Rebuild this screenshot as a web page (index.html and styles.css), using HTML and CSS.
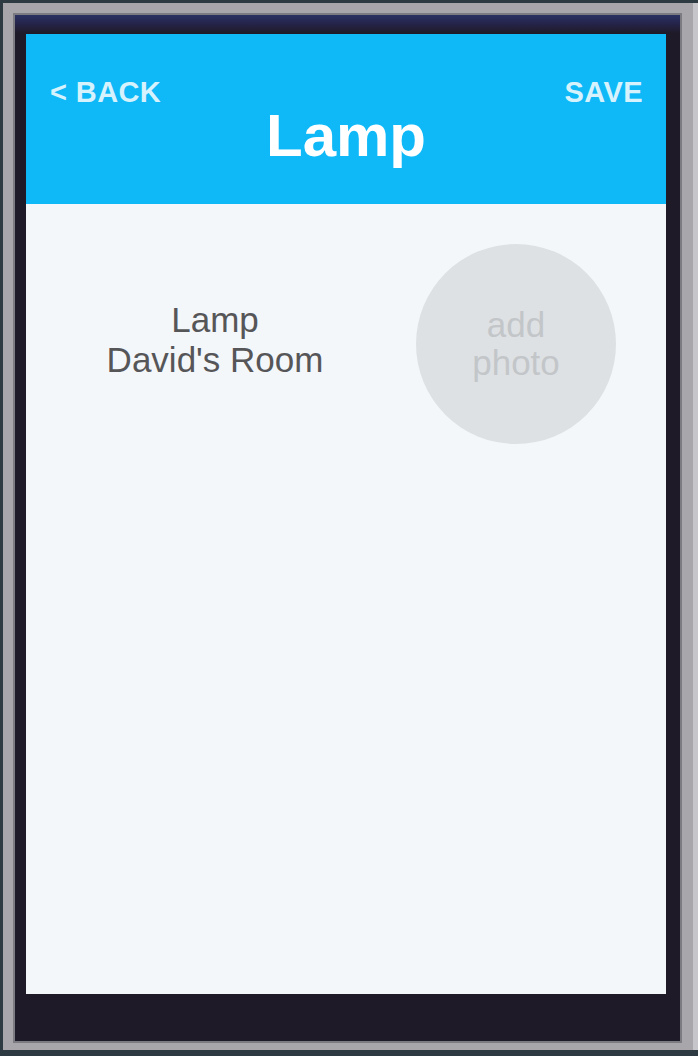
FILE: index.html
```html
<!DOCTYPE html>
<html lang="en">
<head>
<meta charset="utf-8">
<title>Lamp</title>
<link rel="stylesheet" href="styles.css">
</head>
<body>
<div class="device">
  <div class="bezel">
    <div class="screen">
      <header class="header">
        <div class="nav">
          <span class="nav-btn">&lt; BACK</span>
          <span class="nav-btn">SAVE</span>
        </div>
        <h1 class="title">Lamp</h1>
      </header>
      <main class="content">
        <div class="info">
          <div>Lamp</div>
          <div>David's Room</div>
        </div>
        <div class="photo">
          <span>add<br>photo</span>
        </div>
      </main>
    </div>
  </div>
</div>
</body>
</html>
```

FILE: styles.css
```css
html, body {
  margin: 0;
  padding: 0;
}
body {
  width: 698px;
  height: 1056px;
  overflow: hidden;
  background: #2e3a42;
  font-family: "Liberation Sans", Arial, Helvetica, sans-serif;
}
.device {
  box-sizing: border-box;
  margin: 3px 0 0 3px;
  width: 695px;
  height: 1047px;
  padding: 10px 16px 7px 10px;
  background: linear-gradient(to left, #c6c6ca 0, #c6c6ca 5px, #a8a6aa 5px);
}
.bezel {
  box-sizing: border-box;
  width: 669px;
  height: 1030px;
  border: 2px solid #7d7b82;
  padding: 19px 14px 47px 11px;
  background: linear-gradient(#2c3161 0, #262650 7px, #1f1a28 18px);
}
.screen {
  width: 640px;
  height: 960px;
  display: flex;
  flex-direction: column;
  background: #f4f7fa;
}
.header {
  box-sizing: border-box;
  height: 170px;
  padding-top: 44px;
  background: #0fb9f8;
}
.nav {
  display: flex;
  justify-content: space-between;
  padding: 0 23px 0 24px;
  height: 28px;
}
.nav-btn {
  font-size: 29px;
  line-height: 28px;
  font-weight: bold;
  letter-spacing: 0.4px;
  color: #d6f2fd;
}
.title {
  margin: 0;
  text-align: center;
  font-size: 60px;
  line-height: 60px;
  font-weight: bold;
  color: #ffffff;
}
.content {
  flex: 1;
  display: flex;
  align-items: flex-start;
  padding: 40px 50px 0 0;
}
.info {
  flex: 1;
  align-self: flex-start;
  margin: 56px 12px 0 0;
  text-align: center;
  font-size: 35px;
  line-height: 40px;
  color: #565658;
}
.photo {
  width: 200px;
  height: 200px;
  border-radius: 50%;
  background: #dee1e4;
  display: flex;
  align-items: center;
  justify-content: center;
  text-align: center;
  font-size: 35px;
  line-height: 38px;
  color: #c3c6c9;
}
```
